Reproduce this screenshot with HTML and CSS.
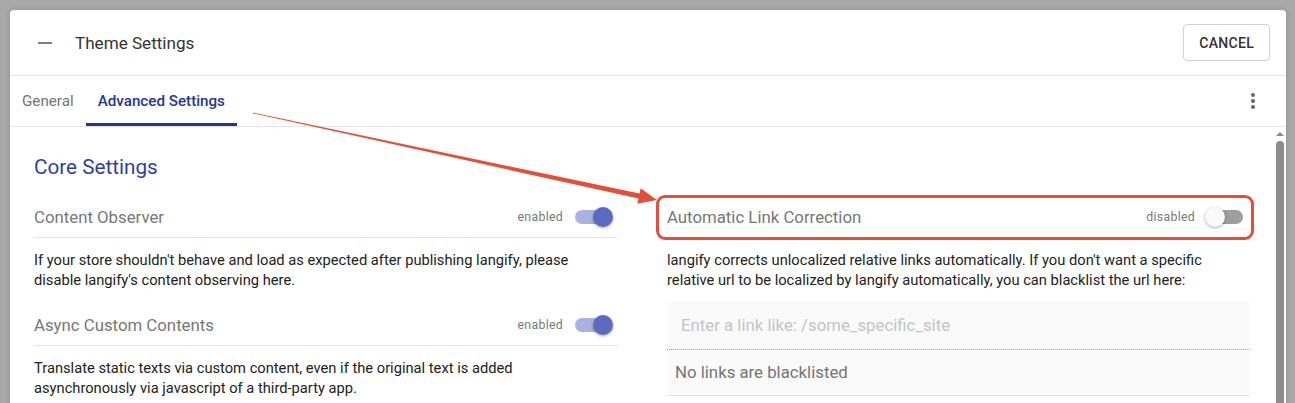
FILE: index.html
```html
<!DOCTYPE html>
<html lang="en">
<head>
    <meta charset="UTF-8">
    <meta name="viewport" content="width=device-width, initial-scale=1.0">
    <title>Theme Settings</title>
    <link rel="stylesheet" href="styles.css">
</head>
<body>
    <div class="dialog">
        <div class="dialog-header">
            <span class="minimize"></span>
            <span class="dialog-title">Theme Settings</span>
            <button class="cancel-btn">CANCEL</button>
        </div>
        <div class="tabs">
            <span class="tab">General</span>
            <span class="tab active">Advanced Settings</span>
            <span class="kebab"><i></i><i></i><i></i></span>
        </div>
        <div class="body">
            <div class="content">
                <h2 class="section-title">Core Settings</h2>
                <div class="columns">
                    <div class="column">
                        <div class="setting-row">
                            <span class="setting-label">Content Observer</span>
                            <span class="state">enabled</span>
                            <span class="switch on"><span class="knob"></span></span>
                        </div>
                        <p class="setting-text">If your store shouldn't behave and load as expected after publishing langify, please disable langify's content observing here.</p>
                        <div class="setting-row">
                            <span class="setting-label">Async Custom Contents</span>
                            <span class="state">enabled</span>
                            <span class="switch on"><span class="knob"></span></span>
                        </div>
                        <p class="setting-text">Translate static texts via custom content, even if the original text is added asynchronously via javascript of a third-party app.</p>
                    </div>
                    <div class="column">
                        <div class="setting-row marked">
                            <span class="setting-label">Automatic Link Correction</span>
                            <span class="state">disabled</span>
                            <span class="switch"><span class="knob"></span></span>
                        </div>
                        <p class="setting-text">langify corrects unlocalized relative links automatically. If you don't want a specific relative url to be localized by langify automatically, you can blacklist the url here:</p>
                        <div class="link-input">Enter a link like: /some_specific_site</div>
                        <div class="link-empty">No links are blacklisted</div>
                    </div>
                </div>
            </div>
            <div class="scrollbar">
                <span class="scroll-arrow"></span>
                <span class="scroll-thumb"></span>
            </div>
        </div>
    </div>

    <!-- Pfeil der Anmerkung -->
    <svg class="annotation" width="1295" height="403" viewBox="0 0 1295 403">
        <polygon points="253,112.6 639.5,193.6 640.7,188.2 657,200 637.3,203.8 638.5,198.4 253,113.4" fill="#e2503c"/>
    </svg>
</body>
</html>
```

FILE: styles.css
```css
body {
    margin: 0;
    background-color: #a9a9a9;
    font-family: Roboto, "Liberation Sans", sans-serif;
    height: 403px;
    overflow: hidden;
}
.dialog {
    margin: 10px 0 0 10px;
    width: 1276px;
    height: 420px;
    background: #fff;
    border-radius: 4px 4px 0 0;
    box-shadow: 0 0 6px rgba(0,0,0,0.15);
}
.dialog-header {
    height: 66px;
    display: flex;
    align-items: center;
    padding: 0 16px 0 28px;
    border-bottom: 1px solid #e3e3e3;
    box-sizing: border-box;
}
.minimize {
    width: 14px;
    height: 2px;
    background: #808080;
    margin-right: 23px;
}
.dialog-title {
    font-size: 17.1px;
    color: #333;
    flex: 1;
}
.cancel-btn {
    font-family: inherit;
    font-size: 14px;
    font-weight: 500;
    color: #333;
    background: #fff;
    border: 1px solid #d0d0d0;
    border-radius: 4px;
    height: 37px;
    padding: 0 15px;
    letter-spacing: 0.3px;
}
.tabs {
    height: 51px;
    display: flex;
    align-items: stretch;
    border-bottom: 1px solid #e3e3e3;
    box-sizing: border-box;
}
.tab {
    display: flex;
    align-items: center;
    padding: 2px 12px 0;
    font-size: 15.2px;
    color: #757575;
    border-bottom: 3px solid transparent;
}
.tab.active {
    color: #283593;
    font-weight: 500;
    border-bottom-color: #283593;
}
.kebab {
    margin-left: auto;
    width: 4px;
    margin-right: 31px;
    display: flex;
    flex-direction: column;
    justify-content: center;
    gap: 2px;
}
.kebab i {
    width: 4px;
    height: 4px;
    border-radius: 50%;
    background: #666;
}
.body {
    display: flex;
}
.content {
    flex: 1;
    padding: 26px 0 0 24px;
}
.section-title {
    margin: 0 0 15px;
    font-size: 20.7px;
    line-height: 28px;
    font-weight: 400;
    color: #303f9f;
}
.columns {
    display: grid;
    grid-template-columns: 584px 583px;
    column-gap: 49px;
}
.setting-row {
    height: 42px;
    display: flex;
    align-items: center;
    border-bottom: 1px solid #e3e3e3;
    box-sizing: border-box;
    position: relative;
}
.setting-label {
    flex: 1;
    font-size: 16.8px;
    color: #777;
}
.state {
    font-size: 12.3px;
    color: #777;
    margin-right: 12px;
    letter-spacing: 0.3px;
}
.switch {
    width: 36px;
    height: 14px;
    border-radius: 7px;
    background: #9e9e9e;
    position: relative;
    margin-right: 7px;
}
.switch .knob {
    position: absolute;
    top: -3px;
    left: -2px;
    width: 20px;
    height: 20px;
    border-radius: 50%;
    background: #fafafa;
    box-shadow: 0 1px 3px rgba(0,0,0,0.35);
}
.switch.on {
    background: #aab2e1;
}
.switch.on .knob {
    left: auto;
    right: -2px;
    background: #5c6bc0;
}
.marked {
    border-bottom-color: transparent;
}
.marked::after {
    content: "";
    position: absolute;
    top: -1px;
    bottom: -3px;
    left: -11px;
    right: -4px;
    border: 3px solid #e2503c;
    border-radius: 9px;
}
.setting-text {
    margin: 12px 0 14px;
    font-size: 14.7px;
    line-height: 20px;
    color: #222;
}
.link-input {
    margin-top: -3px;
    height: 49px;
    background: #fafafa;
    border-bottom: 1px dotted #999;
    box-sizing: border-box;
    padding: 14px 14px 0;
    font-size: 16.8px;
    color: #c4c4c4;
}
.link-empty {
    height: 46px;
    background: #fafafa;
    border-bottom: 1px solid #e3e3e3;
    box-sizing: border-box;
    padding: 12px 8px 0;
    font-size: 16.8px;
    color: #757575;
}
.scrollbar {
    width: 12px;
    display: flex;
    flex-direction: column;
    align-items: center;
    padding-top: 5px;
}
.scroll-arrow {
    width: 0;
    height: 0;
    border-left: 4px solid transparent;
    border-right: 4px solid transparent;
    border-bottom: 4px solid #888;
    margin-bottom: 5px;
}
.scroll-thumb {
    width: 8px;
    height: 300px;
    border-radius: 4px;
    background: #8d8d8d;
}
.annotation {
    position: absolute;
    top: 0;
    left: 0;
    pointer-events: none;
}
```
